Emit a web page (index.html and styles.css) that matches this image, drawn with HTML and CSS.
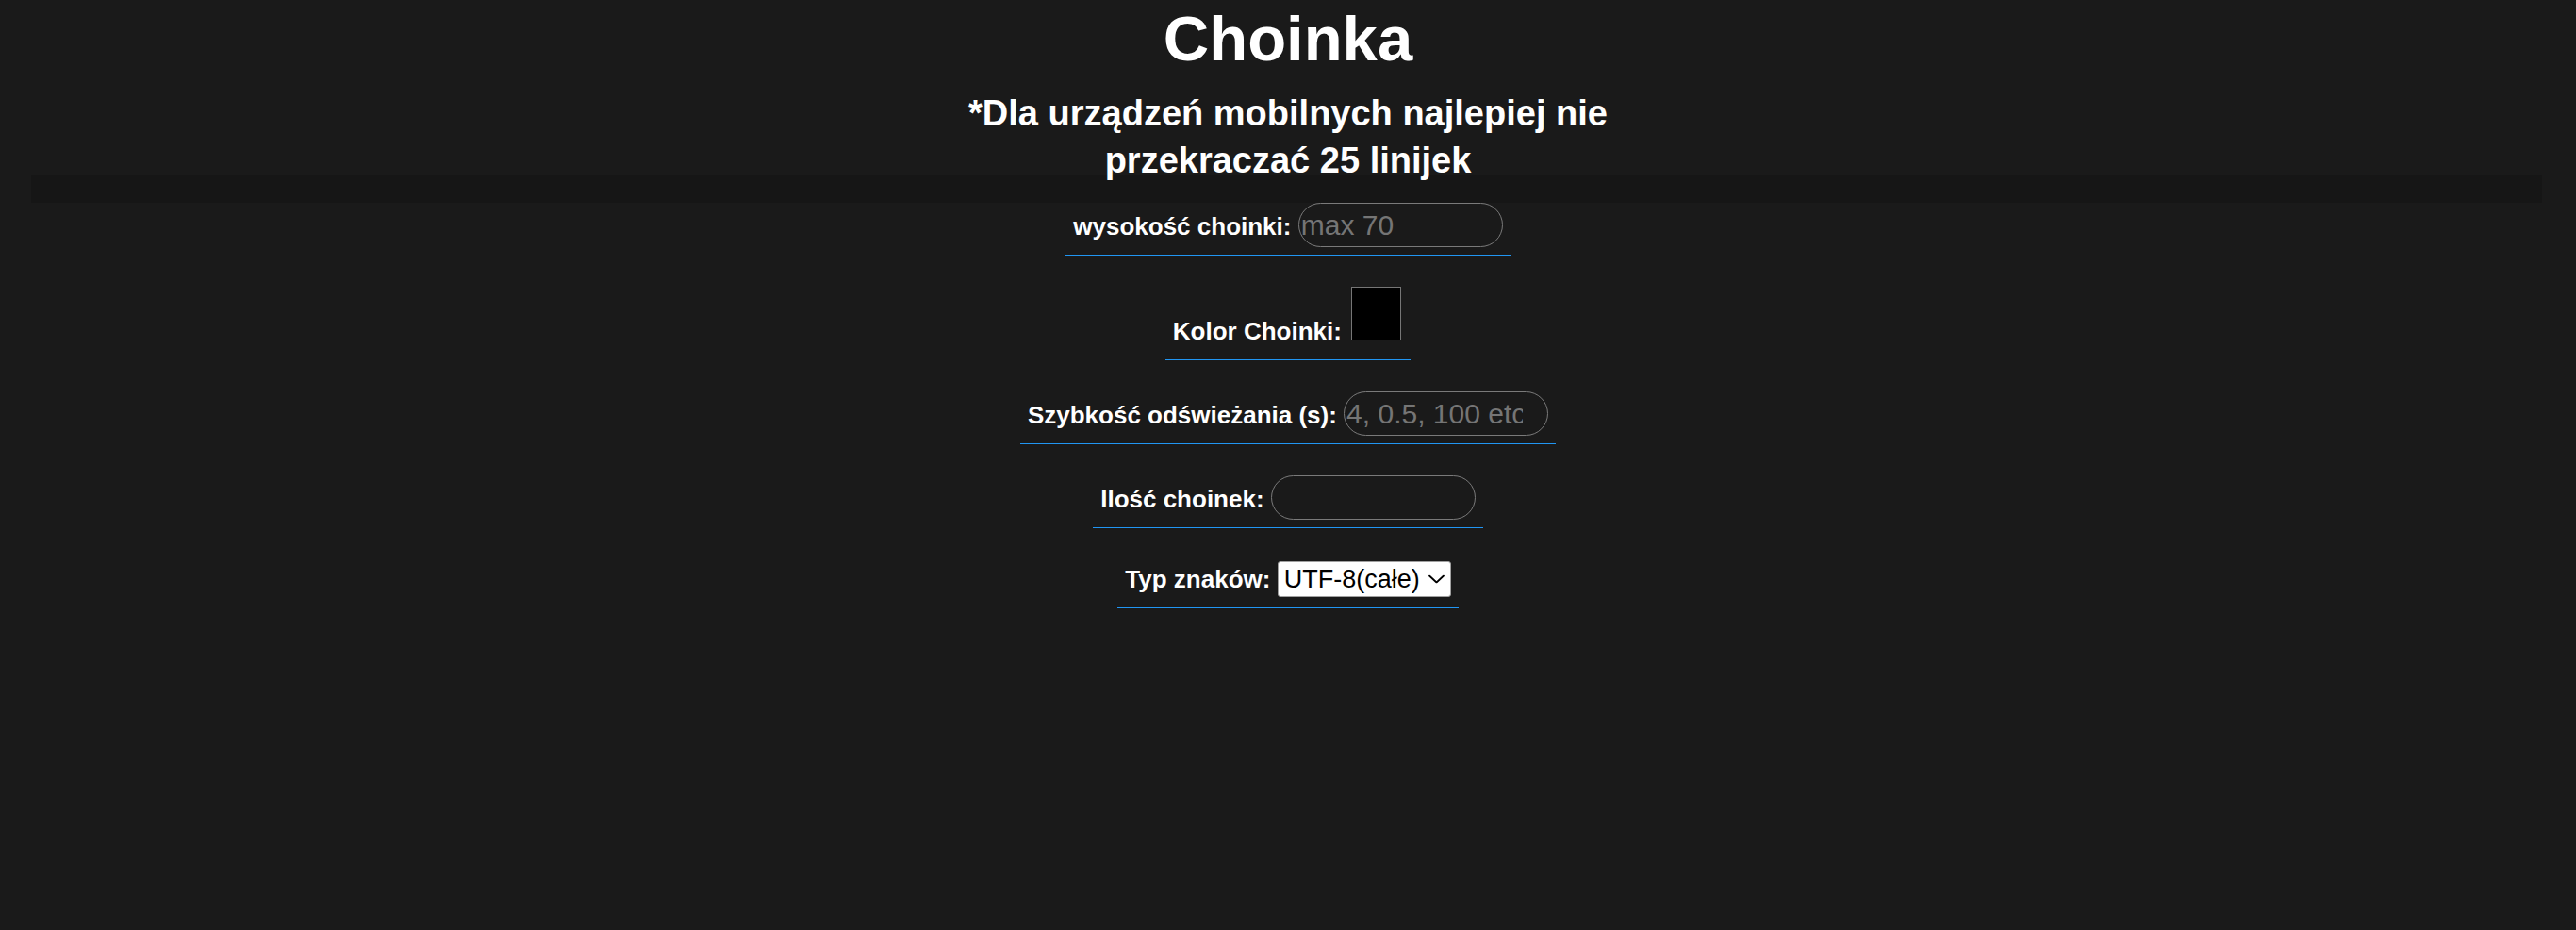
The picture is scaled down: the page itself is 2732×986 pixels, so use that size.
FILE: index.html
```html
<!DOCTYPE html>
<html lang="pl">
<head>
<meta charset="utf-8">
<title>Choinka</title>
<link rel="stylesheet" href="styles.css">
</head>
<body>
<header class="header">
  <h1 class="title">Choinka</h1>
  <h2 class="subtitle">*Dla urządzeń mobilnych najlepiej nie przekraczać 25 linijek</h2>
</header>
<div class="band"></div>
<form class="form">
  <div class="row"><label for="h">wysokość choinki:</label> <input class="field" id="h" type="text" placeholder="max 70"></div>
  <div class="row"><label for="c">Kolor Choinki:</label> <input class="swatch" id="c" type="color" value="#000000"></div>
  <div class="row"><label for="s">Szybkość odświeżania (s):</label> <input class="field" id="s" type="text" placeholder="4, 0.5, 100 etc"></div>
  <div class="row"><label for="n">Ilość choinek:</label> <input class="field" id="n" type="text"></div>
  <div class="row"><label for="t">Typ znaków:</label> <span class="select-wrap"><select class="picker" id="t"><option>UTF-8(całe)</option><option>ASCII</option></select><svg class="chevron" width="17" height="9" viewBox="0 0 17 9" aria-hidden="true"><path d="M1 1 L8.5 8 L16 1" fill="none" stroke="#000" stroke-width="1.8" stroke-linecap="round" stroke-linejoin="round"/></svg></span></div>
</form>
</body>
</html>
```
FILE: styles.css
```css
html, body {
  margin: 0;
  background: #1a1a1a;
}
body {
  color: #ffffff;
  font-family: "Liberation Sans", Arial, sans-serif;
}
.header {
  text-align: center;
}
.title {
  margin: 2px 0 0;
  font-size: 67px;
  line-height: 78px;
  font-weight: bold;
}
.subtitle {
  margin: 15px auto -9px;
  max-width: 720px;
  font-size: 38px;
  line-height: 50px;
  font-weight: bold;
}
.band {
  height: 29px;
  margin: 0 36px 0 33px;
  background: #161616;
}
.form {
  margin: 0;
}
.row {
  width: fit-content;
  margin: 33px auto 0;
  padding: 0 8px 8px;
  border-bottom: 1px solid #2196f3;
  font-size: 26px;
  line-height: 43px;
  font-weight: bold;
  white-space: nowrap;
}
.row:first-child {
  margin-top: 0;
}
.field {
  box-sizing: border-box;
  width: 217px;
  height: 47px;
  margin: 0;
  padding: 1px 26px 1px 2px;
  border: 1px solid #7a7a7a;
  border-radius: 24px;
  background: transparent;
  color: #ffffff;
  font-family: "Liberation Sans", Arial, sans-serif;
  font-size: 30px;
  font-weight: normal;
  outline: none;
}
.field::placeholder {
  color: #757575;
}
.swatch {
  -webkit-appearance: none;
  appearance: none;
  box-sizing: border-box;
  width: 53px;
  height: 57px;
  margin: 0 2px 0 3px;
  padding: 0;
  border: 1px solid #767676;
  background: #000000;
  vertical-align: baseline;
}
.swatch::-webkit-color-swatch-wrapper {
  padding: 0;
}
.swatch::-webkit-color-swatch {
  border: none;
}
.select-wrap {
  position: relative;
  display: inline-flex;
  vertical-align: baseline;
}
.picker {
  -webkit-appearance: none;
  appearance: none;
  box-sizing: border-box;
  width: 184px;
  height: 38px;
  margin: 0;
  padding: 0 30px 0 6px;
  border: 1px solid #a0a0a0;
  border-radius: 3px;
  background: #ffffff;
  color: #000000;
  font-family: "Liberation Sans", Arial, sans-serif;
  font-size: 27px;
  font-weight: normal;
  line-height: normal;
  outline: none;
}
.chevron {
  position: absolute;
  right: 7px;
  top: 50%;
  transform: translateY(-50%);
  pointer-events: none;
}
```
